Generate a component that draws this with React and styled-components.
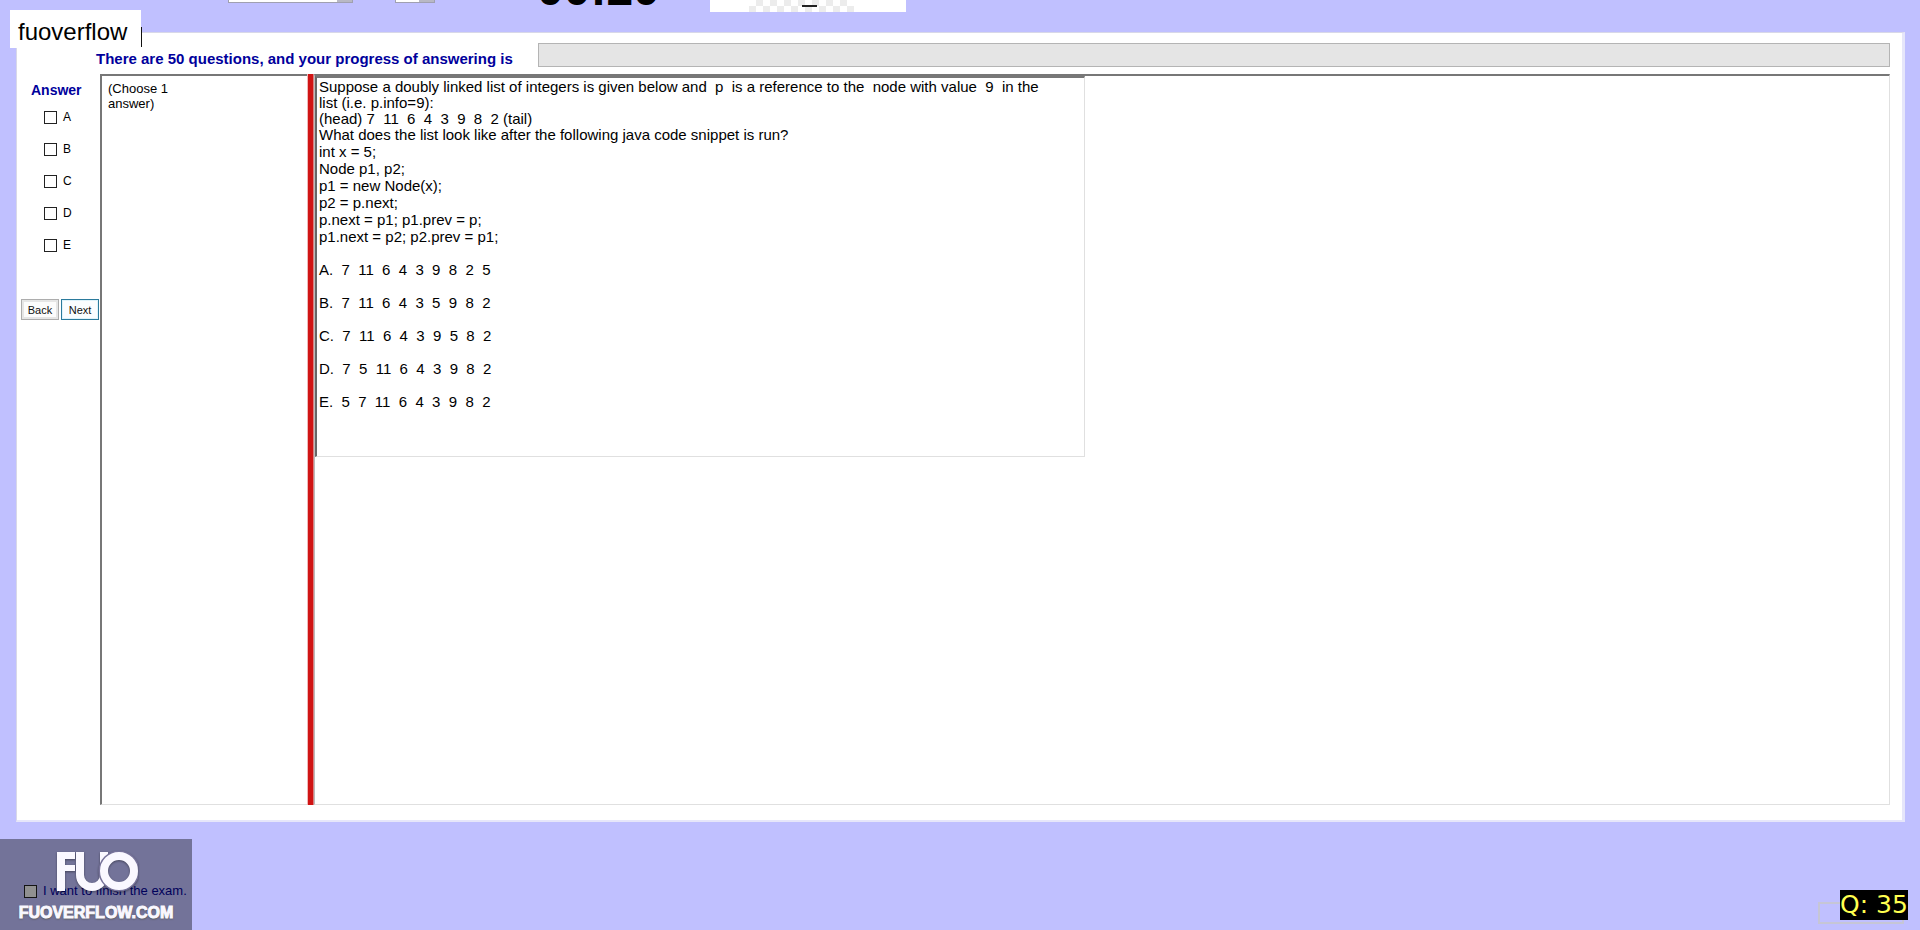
import React from "react";
import styled, { createGlobalStyle } from "styled-components";

const GlobalStyle = createGlobalStyle`
  * { box-sizing: border-box; }
  body {
    margin: 0;
    background: #c0c0ff;
    color: #000;
    font-family: "Liberation Sans", Arial, sans-serif;
    font-size: 16px;
  }
  #root { min-height: 100vh; display: flex; flex-direction: column; }
`;

const Page = styled.div`
  position: relative;
  flex: 1;
  display: flex;
  flex-direction: column;
`;

const TopStrip = styled.header`
  height: 32px;
  padding-left: 228px;
  display: flex;
  align-items: flex-end;
  overflow: hidden;
`;

const StripSelect = styled.select`
  appearance: none;
  flex: none;
  width: ${(p) => p.$width}px;
  height: 22px;
  margin: 0 ${(p) => p.$gap}px 29px 0;
  border: 1px solid #a0a0b0;
  border-radius: 0;
  background: linear-gradient(to right, #fff calc(100% - 15px), #b8b8c4 0);
`;

const Timer = styled.div`
  flex: none;
  width: 173px;
  margin-bottom: 15px;
  font-size: 48px;
  line-height: 56px;
  font-weight: bold;
`;

const Picture = styled.svg`
  flex: none;
  margin-bottom: 20px;
`;

const Panel = styled.main`
  flex: 1;
  margin: 0 15px 0 16px;
  padding: 10px 12px 15px 4px;
  display: flex;
  flex-direction: column;
  background: #fff;
  border: 1px solid #d8d8e8;
  border-right: 3px solid #e6e6fa;
  border-bottom: 2px solid #e6e6fa;
`;

const ProgressRow = styled.div`
  display: flex;
  align-items: flex-start;
  padding-left: 75px;
`;

const Heading = styled.div`
  min-width: 442px;
  padding-top: 8px;
  color: #00009c;
  font-size: 15px;
  line-height: 16px;
  font-weight: bold;
  white-space: nowrap;
`;

const ProgressBar = styled.div`
  flex: 1;
  height: 24px;
  background: #e5e5e5;
  border: 1px solid #b4b4b4;
`;

const Columns = styled.div`
  flex: 1;
  display: flex;
  margin-top: 7px;
`;

const Answers = styled.fieldset`
  width: 79px;
  margin: 0;
  padding: 7px 0 0;
  border: 0;
`;

const AnswerTitle = styled.div`
  padding: 0 0 2px 10px;
  color: #00009c;
  font-size: 14px;
  line-height: 18px;
  font-weight: bold;
`;

const Choice = styled.label`
  display: flex;
  align-items: center;
  gap: 6px;
  height: 32px;
  padding-left: 23px;
  font-size: 12px;
`;

const CheckBox = styled.input`
  appearance: none;
  width: 13px;
  height: 13px;
  margin: 0;
  background: ${(p) => p.$fill || "#fff"};
  border: 1px solid #222;
`;

const Buttons = styled.div`
  display: flex;
  gap: 2px;
  margin-top: 38px;
`;

const NavButton = styled.button`
  width: 38px;
  height: 21px;
  padding: 0;
  font-family: inherit;
  font-size: 11px;
  color: #111;
  background: #fafdff;
  border: 1px solid #2b7a9c;
  box-shadow: inset 0 0 0 1px #dff3fb;

  &:first-child {
    background: #fcfcfc;
    border-color: #adadad;
    box-shadow: inset 0 0 0 2px #e6e6e6;
  }
`;

const Hint = styled.div`
  width: 207px;
  padding: 5px 130px 0 6px;
  font-size: 13px;
  line-height: 15px;
  border: 1px solid #e0e0e0;
  border-top: 2px solid #777;
  border-left: 2px solid #777;
  border-right: 0;
`;

const Splitter = styled.div`
  width: 7px;
  background: #d01414;
  border-left: 1px solid #f0b8b8;
  border-right: 1px solid #d88080;
`;

const Viewer = styled.section`
  flex: 1;
  border: 1px solid #e0e0e0;
  border-top: 2px solid #777;
  border-left: 1px solid #bbb;
`;

const Question = styled.article`
  width: 770px;
  height: 381px;
  padding: 1px 0 0 2px;
  border: 1px solid #e0e0e0;
  border-top: 2px solid #777;
  border-left: 2px solid #666;
  font-size: 15px;
  white-space: pre-wrap;
`;

const Lines = styled.p`
  margin: 0;
  line-height: ${(p) => p.$line}px;
`;

const Options = styled.ul`
  margin: 8px 0 0;
  padding: 0;
  list-style: none;
  line-height: 33px;
`;

const Footer = styled.footer`
  height: 108px;
  padding: 60px 0 0 24px;
`;

const Finish = styled.label`
  display: flex;
  align-items: center;
  gap: 6px;
  font-size: 13px;
  line-height: 18px;
  color: #000098;
`;

const Tag = styled.div`
  position: absolute;
  top: 10px;
  left: 10px;
  width: 131px;
  height: 38px;
  padding-left: 8px;
  font-size: 24px;
  line-height: 43px;
  background: #fff;
`;

const Caret = styled.span`
  position: absolute;
  right: -1px;
  bottom: 1px;
  width: 1px;
  height: 20px;
  background: #111;
`;

const Watermark = styled.div`
  position: absolute;
  left: 0;
  bottom: 0;
  width: 192px;
  height: 91px;
  padding-top: 12px;
  display: flex;
  flex-direction: column;
  align-items: center;
  background: rgba(0, 0, 0, 0.4);
  color: #faf8ff;
  pointer-events: none;
`;

const Mark = styled.svg`
  flex: none;
  filter: drop-shadow(0 1px 1px rgba(0, 0, 0, 0.4));
`;

const Site = styled.div`
  margin-top: 8px;
  font-size: 16px;
  line-height: 24px;
  font-weight: bold;
  white-space: nowrap;
  -webkit-text-stroke: 1px #faf8ff;
  text-shadow: 0 1px 2px rgba(60, 60, 20, 0.7);
`;

const Outline = styled.div`
  position: absolute;
  right: 16px;
  bottom: 6px;
  width: 86px;
  height: 22px;
  border: 2px solid #c6c6d6;
`;

const Counter = styled.div`
  position: absolute;
  right: 12px;
  bottom: 10px;
  width: 68px;
  height: 30px;
  font-family: "DejaVu Sans", sans-serif;
  font-size: 25px;
  line-height: 30px;
  white-space: pre;
  color: #ffff50;
  background: #000;
`;

const prompt = `Suppose a doubly linked list of integers is given below and  p  is a reference to the  node with value  9  in the
list (i.e. p.info=9):
(head) 7  11  6  4  3  9  8  2 (tail)
What does the list look like after the following java code snippet is run?`;

const code = `int x = 5;
Node p1, p2;
p1 = new Node(x);
p2 = p.next;
p.next = p1; p1.prev = p;
p1.next = p2; p2.prev = p1;`;

const options = [
  "A.  7  11  6  4  3  9  8  2  5",
  "B.  7  11  6  4  3  5  9  8  2",
  "C.  7  11  6  4  3  9  5  8  2",
  "D.  7  5  11  6  4  3  9  8  2",
  "E.  5  7  11  6  4  3  9  8  2",
];

const tiles = [...Array(15).keys()];

export default function App() {
  return (
    <>
      <GlobalStyle />
      <Page>
        <TopStrip>
          <StripSelect $width={125} $gap={42} aria-label="Font" />
          <StripSelect $width={40} $gap={102} aria-label="Size" />
          <Timer>00:20</Timer>
          <Picture width="196" height="60" aria-hidden="true">
            <rect width="196" height="60" fill="#fff" />
            {tiles.map((i) => (
              <rect key={i} x={39 + i * 7} y={i % 2 ? 48 : 54} width="7" height="6" fill="#ececec" />
            ))}
            <path d="M92 54h15" stroke="#222" strokeWidth="2" />
          </Picture>
        </TopStrip>
        <Panel>
          <ProgressRow>
            <Heading id="progress">
              There are 50 questions, and your progress of answering is
            </Heading>
            <ProgressBar role="progressbar" aria-labelledby="progress" />
          </ProgressRow>
          <Columns>
            <Answers aria-labelledby="answer">
              <AnswerTitle id="answer">Answer</AnswerTitle>
              {["A", "B", "C", "D", "E"].map((c) => (
                <Choice key={c}>
                  <CheckBox type="checkbox" />
                  {c}
                </Choice>
              ))}
              <Buttons>
                <NavButton type="button">Back</NavButton>
                <NavButton type="button">Next</NavButton>
              </Buttons>
            </Answers>
            <Hint>(Choose 1 answer)</Hint>
            <Splitter />
            <Viewer>
              <Question>
                <Lines $line={16}>{prompt}</Lines>
                <Lines $line={17}>{code}</Lines>
                <Options>
                  {options.map((o) => (
                    <li key={o}>{o}</li>
                  ))}
                </Options>
              </Question>
            </Viewer>
          </Columns>
        </Panel>
        <Footer>
          <Finish>
            <CheckBox type="checkbox" $fill="#f0f0f0" />
            I want to finish the exam.
          </Finish>
        </Footer>
        <Tag>
          fuoverflow
          <Caret />
        </Tag>
        <Watermark>
          <Mark width="84" height="42" viewBox="-2 0 84 42" fill="none" role="img" aria-label="FUO">
            <rect x="1" y="1" width="8" height="39" fill="#faf8ff" />
            <rect x="1" y="1" width="18" height="7" fill="#faf8ff" />
            <rect x="1" y="14" width="18" height="6" fill="#faf8ff" />
            <path d="M24 1v23a12 12 0 0 0 24 0V1" stroke="#faf8ff" strokeWidth="8" />
            <circle cx="63" cy="20" r="16" stroke="#77739a" strokeWidth="9" />
            <circle cx="63" cy="20" r="15" stroke="#faf8ff" strokeWidth="8" />
          </Mark>
          <Site>FUOVERFLOW.COM</Site>
        </Watermark>
        <Outline />
        <Counter>Q: 35</Counter>
      </Page>
    </>
  );
}
